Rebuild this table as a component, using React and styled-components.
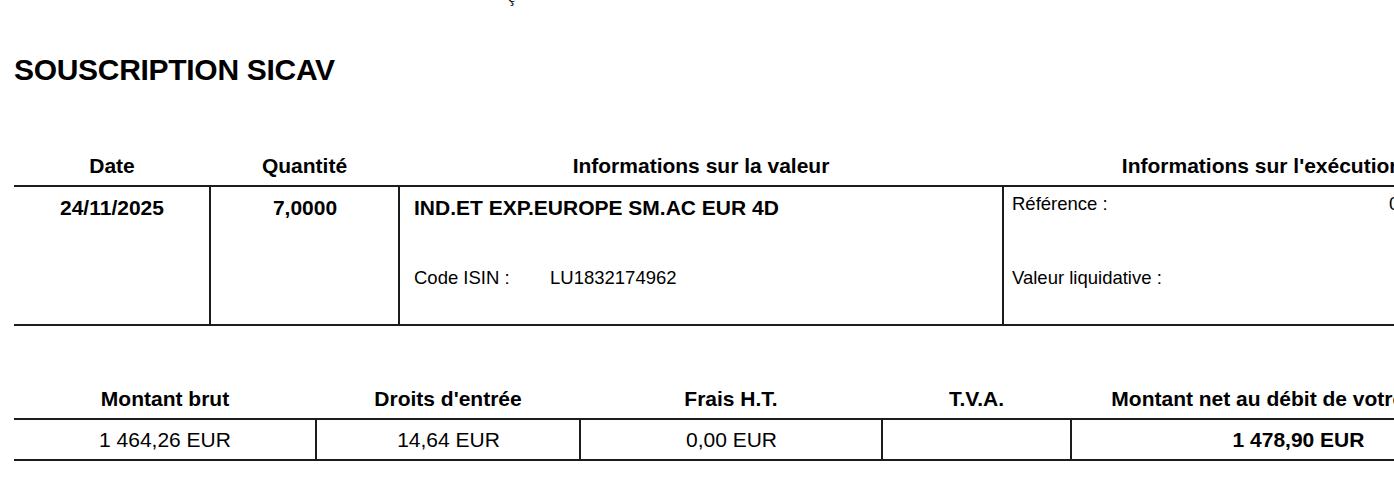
import React from "react";
import styled, { createGlobalStyle } from "styled-components";

const GlobalStyle = createGlobalStyle`
  html, body {
    margin: 0;
    padding: 0;
    overflow: hidden;
    background: #fff;
  }
  body {
    font-family: "Liberation Sans", Arial, sans-serif;
    color: #000;
  }
`;

const Page = styled.div`
  width: 1540px;
  padding-left: 14px;
`;

// bottom of a previous line, cut by the top edge
const TopMark = styled.div`
  height: 8px;
  padding-left: 494px;
  overflow: hidden;
`;

const TopMarkText = styled.div`
  margin-top: -11px;
  font-family: "Liberation Serif", serif;
  font-size: 16px;
  line-height: 16px;
`;

const Title = styled.h1`
  margin: 45px 0 0;
  font-size: 30px;
  line-height: 34px;
  font-weight: bold;
  letter-spacing: -0.3px;
`;

const Table = styled.div`
  display: grid;
  grid-template-columns: ${(p) => p.$cols};
  margin-top: ${(p) => p.$top}px;
`;

const HeadCell = styled.div`
  height: 31px;
  font-size: 21px;
  line-height: 24px;
  font-weight: bold;
  text-align: center;
  white-space: nowrap;
  border-bottom: 2px solid #1c1c1c;
`;

const Cell = styled.div`
  height: ${(p) => p.$h}px;
  border-bottom: 2px solid #1c1c1c;
  border-left: ${(p) => (p.$first ? "none" : "2px solid #1c1c1c")};
  margin-left: ${(p) => (p.$first ? "0" : "-1px")};
  box-sizing: border-box;
  white-space: nowrap;
`;

const BoldCenter = styled.div`
  padding-top: 9px;
  font-size: 21px;
  line-height: 24px;
  font-weight: bold;
  text-align: center;
`;

const ValueBlock = styled.div`
  display: flex;
  flex-direction: column;
  gap: 47px;
  padding: 9px 0 0 14px;
`;

const ValueName = styled.div`
  font-size: 21px;
  line-height: 24px;
  font-weight: bold;
`;

const InfoLine = styled.div`
  display: grid;
  grid-template-columns: ${(p) => p.$label}px auto;
  font-size: 18.5px;
  line-height: 22px;
`;

const ExecBlock = styled.div`
  display: flex;
  flex-direction: column;
  gap: 52px;
  padding: 6px 0 0 8px;
`;

const Amount = styled.div`
  height: 100%;
  display: flex;
  align-items: center;
  justify-content: center;
  font-size: 21px;
  font-weight: ${(p) => (p.$bold ? "bold" : "normal")};
`;

export default function App() {
  return (
    <>
      <GlobalStyle />
      <Page>
        <TopMark>
          <TopMarkText>ç</TopMarkText>
        </TopMark>
        <Title>SOUSCRIPTION SICAV</Title>

        <Table $cols="196px 189px 604px 518px" $top={67}>
          <HeadCell>Date</HeadCell>
          <HeadCell>Quantité</HeadCell>
          <HeadCell>Informations sur la valeur</HeadCell>
          <HeadCell>Informations sur l'exécution</HeadCell>

          <Cell $first $h={139}>
            <BoldCenter>24/11/2025</BoldCenter>
          </Cell>
          <Cell $h={139}>
            <BoldCenter>7,0000</BoldCenter>
          </Cell>
          <Cell $h={139}>
            <ValueBlock>
              <ValueName>IND.ET EXP.EUROPE SM.AC EUR 4D</ValueName>
              <InfoLine $label={136}>
                <span>Code ISIN :</span>
                <span>LU1832174962</span>
              </InfoLine>
            </ValueBlock>
          </Cell>
          <Cell $h={139}>
            <ExecBlock>
              <InfoLine $label={377}>
                <span>Référence :</span>
                <span>0000184512</span>
              </InfoLine>
              <InfoLine $label={400}>
                <span>Valeur liquidative :</span>
                <span>209,18 EUR</span>
              </InfoLine>
            </ExecBlock>
          </Cell>
        </Table>

        <Table $cols="302px 264px 302px 189px 454px" $top={61}>
          <HeadCell>Montant brut</HeadCell>
          <HeadCell>Droits d'entrée</HeadCell>
          <HeadCell>Frais H.T.</HeadCell>
          <HeadCell>T.V.A.</HeadCell>
          <HeadCell>Montant net au débit de votre compte</HeadCell>

          <Cell $first $h={41}>
            <Amount>1 464,26 EUR</Amount>
          </Cell>
          <Cell $h={41}>
            <Amount>14,64 EUR</Amount>
          </Cell>
          <Cell $h={41}>
            <Amount>0,00 EUR</Amount>
          </Cell>
          <Cell $h={41}>
            <Amount />
          </Cell>
          <Cell $h={41}>
            <Amount $bold>1 478,90 EUR</Amount>
          </Cell>
        </Table>
      </Page>
    </>
  );
}
